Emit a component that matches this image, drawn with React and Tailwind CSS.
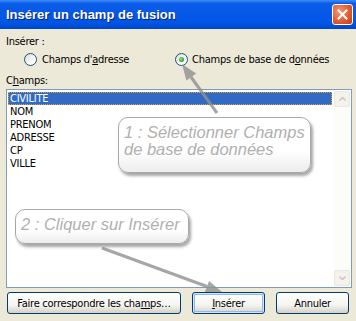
import React from 'react';

const font = { fontFamily: '"Liberation Sans", Arial, sans-serif' };
const uiFont = { fontFamily: '"DejaVu Sans Condensed", "Liberation Sans", sans-serif' };

const Radio = ({ checked }) => (
    <span className="relative inline-block w-[13px] h-[13px] rounded-full border border-[#1C5180] bg-[linear-gradient(135deg,#DCD9CF,#FFFFFF_70%)] shrink-0">
        {checked && (
            <span className="absolute left-[3px] top-[3px] w-[5px] h-[5px] rounded-full bg-[radial-gradient(circle_at_40%_40%,#8FE38F,#21A121_70%)]" />
        )}
    </span>
);

const XpButton = ({ children, width, isDefault }) => (
    <button
        className={`h-[22px] ${width} rounded-[3px] border border-[#003C74] bg-[linear-gradient(to_bottom,#FFFFFF,#F4F4F0_60%,#D6D0C5)] text-[11px] tracking-[-0.25px] text-black flex items-center justify-center ${isDefault ? 'shadow-[inset_0_0_0_1px_#CEE7FF,inset_0_0_0_2px_#98B8EA]' : ''}`}
        style={uiFont}
    >
        {children}
    </button>
);

const items = ['CIVILITE', 'NOM', 'PRENOM', 'ADRESSE', 'CP', 'VILLE'];

const App = () => {
    return (
        <div className="relative w-[356px] h-[321px] overflow-hidden bg-[#ECE9D8] text-black" style={font}>
            {/* Title bar */}
            <div className="h-[29px] flex items-center justify-between pl-[6px] pr-[3px] bg-[linear-gradient(to_bottom,#3D8CF5,#0B5CE8_12%,#0055E5_80%,#0046C8)]">
                <span className="text-white font-bold text-[13px] [text-shadow:1px_1px_0_#0A246A]">Insérer un champ de fusion</span>
                <div className="w-[21px] h-[21px] rounded-[3px] border border-white bg-[radial-gradient(circle_at_35%_35%,#F09A7A,#E2562B_60%,#C23C10)] flex items-center justify-center">
                    <svg width="11" height="11" viewBox="0 0 11 11">
                        <path d="M1.5 1.5 L9.5 9.5 M9.5 1.5 L1.5 9.5" stroke="white" strokeWidth="2" strokeLinecap="square" />
                    </svg>
                </div>
            </div>

            {/* Body */}
            <div className="px-[6px] text-[11px] tracking-[-0.25px] leading-[13px]" style={uiFont}>
                <div className="pt-[6px]">Insérer :</div>
                <div className="flex items-center mt-[5px] h-[13px]">
                    <div className="flex items-center gap-[5px] ml-[18px] w-[151px]">
                        <Radio />
                        <span>Champs d'<u>a</u>dresse</span>
                    </div>
                    <div className="flex items-center gap-[4px]">
                        <Radio checked />
                        <span>Champs de base de d<u>o</u>nnées</span>
                    </div>
                </div>
                <div className="mt-[8px]">C<u>h</u>amps:</div>

                {/* Listbox */}
                <div className="mt-[2px] w-[346px] h-[199px] border border-[#7F9DB9] bg-white flex">
                    <div className="flex-1 pt-[2px] pl-[1px] pr-[2px]">
                        {items.map((it, i) => (
                            <div
                                key={it}
                                className={`h-[13px] leading-[13px] pl-[2px] ${i === 0 ? 'bg-[#316AC5] text-white outline-1 outline-dotted outline-[#E8A030] -outline-offset-1' : ''}`}
                            >
                                {it}
                            </div>
                        ))}
                    </div>
                    <div className="w-[17px] bg-[#FCFCF9] flex flex-col justify-between pt-[1px] pb-[1px] pr-[1px]">
                        <div className="h-[16px] rounded-[2px] border border-[#E8E8DF] bg-[#F3F2EC] flex items-center justify-center">
                            <svg width="7" height="4" viewBox="0 0 7 4"><path d="M0.5 3.5 L3.5 0.5 L6.5 3.5" stroke="#C9C7BA" strokeWidth="1.5" fill="none" /></svg>
                        </div>
                        <div className="h-[16px] rounded-[2px] border border-[#E8E8DF] bg-[#F3F2EC] flex items-center justify-center">
                            <svg width="7" height="4" viewBox="0 0 7 4"><path d="M0.5 0.5 L3.5 3.5 L6.5 0.5" stroke="#C9C7BA" strokeWidth="1.5" fill="none" /></svg>
                        </div>
                    </div>
                </div>

                {/* Buttons */}
                <div className="flex mt-[4px] pl-[1px] gap-[11px]">
                    <XpButton width="w-[174px]">Faire correspondre les cha<u>m</u>ps…</XpButton>
                    <XpButton width="w-[73px]" isDefault><u>I</u>nsérer</XpButton>
                    <XpButton width="w-[73px]">Annuler</XpButton>
                </div>
            </div>

            {/* Callouts */}
            <div className="absolute left-[118px] top-[117px] w-[193px] h-[56px] rounded-[10px] border border-[#A8A8A8] bg-[linear-gradient(to_bottom,#FFFFFF,#FFFFFF_60%,#EDEDED)] shadow-[2px_3px_3px_rgba(0,0,0,0.35)] px-[5px] pt-[6px] italic text-[16.5px] leading-[17px] text-[#B0B0B0]">
                1 : Sélectionner Champs<br />de base de données
            </div>
            <div className="absolute left-[15px] top-[209px] w-[174px] h-[35px] rounded-[10px] border border-[#A8A8A8] bg-[linear-gradient(to_bottom,#FFFFFF,#FFFFFF_60%,#EDEDED)] shadow-[2px_3px_3px_rgba(0,0,0,0.35)] px-[5px] pt-[6px] italic text-[16.5px] leading-[17px] text-[#B0B0B0]">
                2 : Cliquer sur Insérer
            </div>

            {/* Arrows */}
            <svg className="absolute inset-0 pointer-events-none" width="356" height="321">
                <g opacity="0.8">
                    <line x1="217" y1="113" x2="191" y2="77" stroke="#909090" strokeWidth="3" />
                    <polygon points="182,64 196.2,73.5 186.4,80.5" fill="#909090" />
                    <line x1="102" y1="248" x2="207" y2="286.5" stroke="#909090" strokeWidth="3" />
                    <polygon points="222,292 204.9,292.1 209.1,280.9" fill="#909090" />
                </g>
            </svg>
        </div>
    );
};

export default App;
